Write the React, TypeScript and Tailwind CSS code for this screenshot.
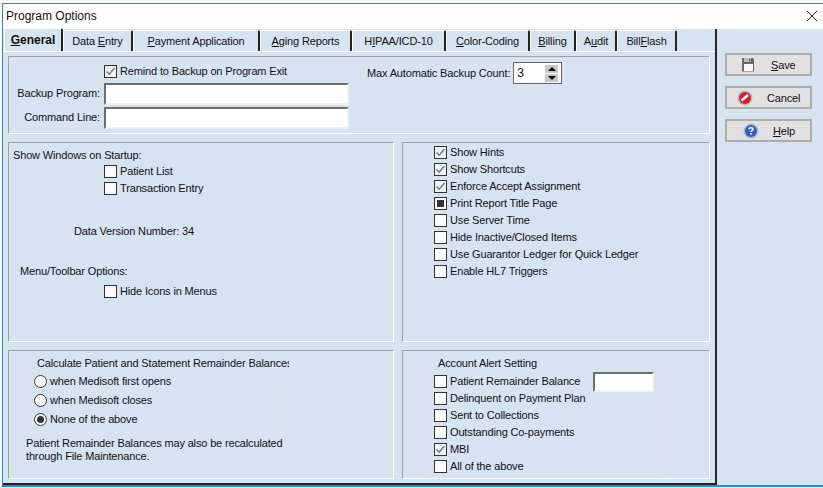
const FONT = "font-['Liberation_Sans',Arial,sans-serif]";

const tabs = [
  { pre: "", key: "G", post: "eneral", w: "w-[59px]" },
  { pre: "Data ", key: "E", post: "ntry", w: "w-[70px]" },
  { pre: "", key: "P", post: "ayment Application", w: "w-[127px]" },
  { pre: "", key: "A", post: "ging Reports", w: "w-[92px]" },
  { pre: "H", key: "I", post: "PAA/ICD-10", w: "w-[94px]" },
  { pre: "", key: "C", post: "olor-Coding", w: "w-[84px]" },
  { pre: "", key: "B", post: "illing", w: "w-[46px]" },
  { pre: "A", key: "u", post: "dit", w: "w-[41px]" },
  { pre: "Bill", key: "F", post: "lash", w: "w-[60px]" },
];

function Tab({ tab, active }: { tab: (typeof tabs)[number]; active: boolean }) {
  return (
    <div
      className={`flex items-center justify-center rounded-t-[2px] border-t border-l border-t-white border-l-white border-r-2 border-r-[#222] ${tab.w} ${
        active ? "h-[23px] text-[12px] font-bold tracking-[0px]" : "h-[21px]"
      }`}
    >
      <span>
        {tab.pre}
        <u>{tab.key}</u>
        {tab.post}
      </span>
    </div>
  );
}

function Check({ state }: { state?: "on" | "mixed" }) {
  return (
    <span
      className={`flex h-[13px] w-[13px] shrink-0 items-center justify-center border border-[#333] ${
        state === "on" ? "bg-[#eef3f9]" : "bg-white"
      }`}
    >
      {state === "on" && (
        <svg width="11" height="11" viewBox="0 0 11 11">
          <path d="M1.5 5.5 L4.2 8.2 L9.5 2" fill="none" stroke="#777" strokeWidth="1.4" />
        </svg>
      )}
      {state === "mixed" && <span className="h-[7px] w-[7px] bg-[#333]" />}
    </span>
  );
}

function CheckRow({ label, state, className = "" }: { label: string; state?: "on" | "mixed"; className?: string }) {
  return (
    <div className={`flex h-[17px] items-center gap-[3px] ${className}`}>
      <Check state={state} />
      <span className="whitespace-nowrap">{label}</span>
    </div>
  );
}

function Radio({ label, on }: { label: string; on?: boolean }) {
  return (
    <div className="flex h-[19px] items-center gap-[3px]">
      <span className="flex h-[13px] w-[13px] items-center justify-center rounded-full border border-[#333] bg-white">
        {on && <span className="h-[7px] w-[7px] rounded-full bg-[#333]" />}
      </span>
      <span className="whitespace-nowrap">{label}</span>
    </div>
  );
}

function Panel({ className = "", children }: { className?: string; children?: React.ReactNode }) {
  return (
    <div className={`border border-t-[#a0a0a0] border-l-[#a0a0a0] border-r-white border-b-white ${className}`}>
      {children}
    </div>
  );
}

function TextBox({ className = "" }: { className?: string }) {
  return (
    <div className={`border-2 border-t-[#6e6e6e] border-l-[#6e6e6e] border-r-[#f0f0f0] border-b-[#f0f0f0] bg-white ${className}`} />
  );
}

function SaveIcon() {
  return (
    <svg width="14" height="16" viewBox="0 0 14 16">
      <path d="M1 1 H12 L13 3 V15 H1 Z" fill="#6a6a6a" />
      <rect x="3" y="1" width="7" height="4" fill="#bdbdbd" />
      <rect x="8" y="2" width="1.5" height="2.5" fill="#6a6a6a" />
      <rect x="3" y="7" width="9" height="8" fill="#f6f6f6" />
      <rect x="1" y="14" width="12" height="1" fill="#aaa" />
    </svg>
  );
}

function CancelIcon() {
  return (
    <svg width="16" height="16" viewBox="0 0 16 16">
      <circle cx="8" cy="8" r="7.5" fill="#bbb" />
      <circle cx="8" cy="8" r="6" fill="#d81e2a" />
      <path d="M4.5 10.5 L11 5" stroke="#fff" strokeWidth="2.6" />
    </svg>
  );
}

function HelpIcon() {
  return (
    <svg width="16" height="16" viewBox="0 0 16 16">
      <circle cx="8" cy="8" r="7.5" fill="#b4bccc" />
      <circle cx="8" cy="8" r="6" fill="#2c62c4" />
      <path d="M6 6.2 C6 4.4 10 4.4 10 6.2 C10 7.6 8 7.6 8 9" fill="none" stroke="#fff" strokeWidth="1.5" />
      <rect x="7.2" y="10" width="1.6" height="1.6" fill="#fff" />
    </svg>
  );
}

function ActionButton({ icon, iconBox, children }: { icon: React.ReactNode; iconBox: string; children: React.ReactNode }) {
  return (
    <div className="flex h-[23px] w-[87px] items-center border-2 border-[#adadad] bg-[#e1e1e1]">
      <span className={`flex shrink-0 justify-start ${iconBox}`}>{icon}</span>
      <span className="pt-[1px]">{children}</span>
    </div>
  );
}

export default function App() {
  return (
    <div className={`h-[488px] w-[823px] overflow-hidden bg-white pl-[2px] pt-[3px] text-[11px] leading-[13px] tracking-[-0.15px] text-[#111] ${FONT}`}>
      <div className="flex h-[484px] flex-col border-t border-l border-b-2 border-[#2488e0]">
        <div className="flex h-[25px] shrink-0 items-center justify-between pb-[1px] pl-[3px] pr-[5px] text-[12px] tracking-[0px]">
          <span>Program Options</span>
          <svg width="12" height="12" viewBox="0 0 12 12">
            <path d="M1 1 L11 11 M11 1 L1 11" stroke="#222" strokeWidth="1" />
          </svg>
        </div>

        <div className="flex min-h-0 flex-1 bg-[#d6e4f2]">
          <div className="flex w-[714px] shrink-0 flex-col border-r-2 border-b-2 border-[#222]">
            <div className="relative z-10 flex h-[22px] shrink-0 items-end pl-[1px]">
              {tabs.map((tab, i) => (
                <Tab key={tab.post} tab={tab} active={i === 0} />
              ))}
            </div>
            <div className="flex flex-1 flex-col gap-[8px] border-t border-white px-[5px] pt-[4px]">
              <Panel className="flex h-[78px] w-[702px] shrink-0">
                <div className="w-[95px] shrink-0 pt-[25px] pr-[4px] text-right">
                  <div className="flex h-[22px] items-center justify-end whitespace-nowrap">Backup Program:</div>
                  <div className="mt-[2px] flex h-[22px] items-center justify-end whitespace-nowrap">Command Line:</div>
                </div>
                <div className="w-[245px] shrink-0 pt-[6px]">
                  <CheckRow label="Remind to Backup on Program Exit" state="on" />
                  <TextBox className="mt-[3px] h-[22px] w-[245px]" />
                  <TextBox className="mt-[2px] h-[22px] w-[245px]" />
                </div>
                <div className="ml-[18px] mt-[5px] flex h-[22px] items-center gap-[3px] self-start">
                  <span className="whitespace-nowrap">Max Automatic Backup Count:</span>
                  <div className="flex h-[22px] w-[49px] items-center justify-between border border-[#666] bg-white px-[3px] text-[12px]">
                    <span>3</span>
                    <div className="flex flex-col gap-[1px]">
                      <span className="flex h-[8px] w-[13px] items-center justify-center bg-[#c8c8c8]">
                        <span className="h-0 w-0 border-x-[4px] border-b-[4px] border-x-transparent border-b-black" />
                      </span>
                      <span className="flex h-[8px] w-[13px] items-center justify-center bg-[#c8c8c8]">
                        <span className="h-0 w-0 border-x-[4px] border-t-[4px] border-x-transparent border-t-black" />
                      </span>
                    </div>
                  </div>
                </div>
              </Panel>

              <div className="flex h-[200px] shrink-0 gap-[8px]">
                <Panel className="w-[386px] pl-[4px] pt-[6px]">
                  <div className="h-[13px]">Show Windows on Startup:</div>
                  <div className="ml-[91px] mt-[1px]">
                    <CheckRow label="Patient List" />
                    <CheckRow label="Transaction Entry" />
                  </div>
                  <div className="ml-[61px] mt-[28px]">Data Version Number: 34</div>
                  <div className="ml-[7px] mt-[27px]">Menu/Toolbar Options:</div>
                  <div className="ml-[91px] mt-[5px]">
                    <CheckRow label="Hide Icons in Menus" />
                  </div>
                </Panel>
                <Panel className="w-[308px] pl-[31px] pt-[1px]">
                  <CheckRow label="Show Hints" state="on" />
                  <CheckRow label="Show Shortcuts" state="on" />
                  <CheckRow label="Enforce Accept Assignment" state="on" />
                  <CheckRow label="Print Report Title Page" state="mixed" />
                  <CheckRow label="Use Server Time" />
                  <CheckRow label="Hide Inactive/Closed Items" />
                  <CheckRow label="Use Guarantor Ledger for Quick Ledger" />
                  <CheckRow label="Enable HL7 Triggers" />
                </Panel>
              </div>

              <div className="flex h-[129px] shrink-0 gap-[8px]">
                <Panel className="w-[386px] pl-[17px] pt-[11px]">
                  <div className="relative h-[71px] w-[262px] border border-[#dfe5ec] pl-[7px] pt-[9px]">
                    <span className="absolute -top-[6px] left-[9px] h-[13px] w-[253px] overflow-hidden whitespace-nowrap bg-[#d6e4f2] px-[1px]">
                      Calculate Patient and Statement Remainder Balances
                    </span>
                    <Radio label="when Medisoft first opens" />
                    <Radio label="when Medisoft closes" />
                    <Radio label="None of the above" on />
                  </div>
                  <p className="mt-[4px] w-[270px]">
                    Patient Remainder Balances may also be recalculated through File Maintenance.
                  </p>
                </Panel>
                <Panel className="w-[308px] pl-[21px] pt-[11px]">
                  <div className="relative h-[113px] w-[241px] border border-[#dfe5ec] pl-[9px] pt-[10px]">
                    <span className="absolute -top-[6px] left-[7px] h-[13px] whitespace-nowrap bg-[#d6e4f2] px-[6px]">
                      Account Alert Setting
                    </span>
                    <div className="flex items-center">
                      <CheckRow label="Patient Remainder Balance" className="w-[159px]" />
                      <TextBox className="-my-[2px] h-[20px] w-[61px]" />
                    </div>
                    <CheckRow label="Delinquent on Payment Plan" />
                    <CheckRow label="Sent to Collections" />
                    <CheckRow label="Outstanding Co-payments" />
                    <CheckRow label="MBI" state="on" />
                    <CheckRow label="All of the above" />
                  </div>
                </Panel>
              </div>
            </div>
          </div>

          <div className="flex flex-1 flex-col gap-[10px] pl-[8px] pt-[24px]">
            <ActionButton icon={<SaveIcon />} iconBox="w-[44px] pl-[14px]">
              <u>S</u>ave
            </ActionButton>
            <ActionButton icon={<CancelIcon />} iconBox="w-[40px] pl-[10px]">
              Cancel
            </ActionButton>
            <ActionButton icon={<HelpIcon />} iconBox="w-[46px] pl-[16px]">
              <u>H</u>elp
            </ActionButton>
          </div>
        </div>
      </div>
    </div>
  );
}
